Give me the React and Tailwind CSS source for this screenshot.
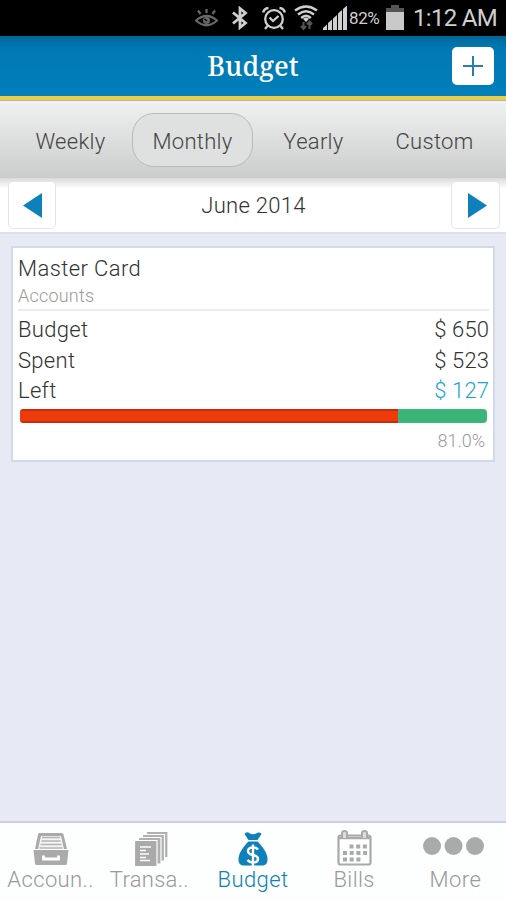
import { useState } from 'react';

const PERIODS = [
  { label: 'Weekly', box: 'w-[121px] ml-[10px]' },
  { label: 'Monthly', box: 'w-[121px] ml-[1px]' },
  { label: 'Yearly', box: 'w-[121px]' },
  { label: 'Custom', box: 'w-[121px]' },
];

const BUDGET = { name: 'Master Card', type: 'Accounts', total: 650, spent: 523 };

function StatusBar() {
  return (
    <div className="flex h-9 shrink-0 items-start bg-black pl-[195px] text-[#cfcfcf]">
      <svg className="mt-[9px] h-[19px] w-[23px]" viewBox="0 0 23 19" fill="none" stroke="#686868" strokeWidth="2.200">
        <path d="M1 11.500Q11.500 2.500 22 11.500Q11.500 21 1 11.500Z" />
        <path d="M11.500 0v4M3 1.500l2.500 3.500M20 1.500l-2.500 3.500" />
        <circle cx="11.500" cy="11.500" r="3.500" fill="#686868" stroke="none" />
        <path d="M9.500 10l2.500 2" stroke="#000" strokeWidth="1.400" />
      </svg>
      <svg className="mt-[6px] ml-[14px] h-[24px] w-[16px]" viewBox="0 0 16 24" fill="none" stroke="currentColor" strokeWidth="2.800">
        <path d="M1 6.500l12.500 10.500L8 21.500V2.500l5.500 4.500L1 17.500" />
      </svg>
      <svg className="mt-[6px] ml-[14px] h-[24px] w-[24px]" viewBox="0 0 24 24" fill="none" stroke="currentColor" strokeWidth="2.300">
        <circle cx="12" cy="13" r="8.800" />
        <path d="M1.200 6.500Q2 2.500 6.500 2M22.800 6.500Q22 2.500 17.500 2" strokeWidth="2.400" />
        <path d="M7.500 11.500l3.500 3.500 5.500-5M5.500 20l-2.500 3M18.500 20l2.500 3" />
      </svg>
      <svg className="mt-[5px] ml-[8px] h-[26px] w-[24px]" viewBox="0 0 24 26" fill="none" stroke="currentColor" strokeWidth="2.500">
        <path d="M1 5.500Q12-2.500 23 5.500M4 9.500Q12 3 20 9.500M7.200 13Q12 8.500 16.800 13" />
        <path d="M9 13.700L12 17l3-3.300Q12 11.500 9 13.700Z" fill="currentColor" stroke="none" />
        <path d="M9.500 17v7M7 21l2.500 3 2.500-3M15.500 24v-7M13 19.500l2.500-3 2.500 3" stroke="#555" strokeWidth="2" />
      </svg>
      <svg className="mt-[6px] ml-[5px] h-[24px] w-[24px]" viewBox="0 0 24 24" fill="currentColor">
        <path d="M0 24v-2l4-3.500V24ZM5 24v-7l4-3.500V24ZM10 24V12.500L14 9v15ZM15 24V7.500L19 4v20ZM20 24V3l4-3.500V24Z" />
      </svg>
      <span className="mt-[8px] ml-[2px] w-[37px] text-[17px] leading-[21px] tracking-[-0.4px]">82%</span>
      <svg className="mt-[5px] h-[25px] w-[18px]" viewBox="0 0 18 25">
        <path d="M5 0h8v3h5v4H0V3h5Z" fill="#555" />
        <path d="M0 7h18v18H0Z" fill="#c9c9c9" />
      </svg>
      <span className="mt-[4px] ml-[9px] text-[24px] leading-[28px] tracking-[-0.7px] whitespace-nowrap">1:12 AM</span>
    </div>
  );
}

function Header() {
  return (
    <header className="grid h-[60px] shrink-0 grid-cols-[1fr_auto_1fr] items-center bg-linear-to-b from-[#006797] via-[#0079b3] via-20% to-[#007fba] pr-3 pl-3">
      <h1 className="col-start-2 -mt-[2px] font-['Noto_Serif','Liberation_Serif',serif] text-[27px] leading-none font-medium text-white">Budget</h1>
      <button type="button" aria-label="Add budget" className="flex h-[38px] w-[42px] items-center justify-center justify-self-end rounded-[5px] bg-white">
        <svg className="h-[20px] w-[20px]" viewBox="0 0 20 20" stroke="#277fae" strokeWidth="2">
          <path d="M10 0v20M0 10h20" />
        </svg>
      </button>
    </header>
  );
}

function Row({ label, value, tone = 'text-[#333]' }) {
  return (
    <div className="flex h-[30.500px] items-center justify-between">
      <span className="tracking-[0.3px]">{label}</span>
      <span className={`tracking-[0.1px] ${tone}`}>$ {value}</span>
    </div>
  );
}

function BudgetCard({ item }) {
  const percent = Math.ceil((item.spent / item.total) * 100);
  return (
    <section className="mx-[11px] mt-[12px] h-[216px] border-2 border-[#d2daea] bg-white pr-[4px] pl-[5px] text-[22px] font-[350] text-[#333]">
      <div className="flex h-[63px] flex-col border-b-2 border-[#ededef] pt-[7px]">
        <span className="leading-[27px] tracking-[0.4px]">{item.name}</span>
        <span className="text-[18px] leading-[27px] tracking-[0.2px] text-[#999]">{item.type}</span>
      </div>
      <div className="pt-[3.500px]">
        <Row label="Budget" value={item.total} />
        <Row label="Spent" value={item.spent} />
        <Row label="Left" value={item.total - item.spent} tone="text-[#21a3d2]" />
      </div>
      <div className="mx-[2px] mt-[3px] flex h-[14px] overflow-hidden rounded-[4px] bg-[#3cb578]">
        <div className="border-y-2 border-[#cb2d0c] bg-[#ee3b0c]" style={{ width: `${percent}%` }} />
      </div>
      <div className="mt-[4px] pr-[4px] text-right text-[18px] leading-[27px] text-[#999]">{percent.toFixed(1)}%</div>
    </section>
  );
}

function AccountsIcon() {
  return (
    <svg className="h-[32px] w-[36px]" viewBox="0 0 36 32">
      <path d="M6 0h23q1 0 1.500 1.500L34 16H2L5 1.500Q5 0 6 0Z" fill="#aaa" />
      <path d="M8 3h20l3 13h-26Z" fill="#f4f4f4" />
      <path d="M9 4.500h18M8.500 8h19M7.500 11.500h21M6.500 15h23" stroke="#b4b4b4" strokeWidth="1.700" />
      <path d="M.5 17h35L34 30.500q0 1.500-2 1.500H4q-2 0-2-1.500Z" fill="#aaa" />
      <path d="M10.500 22.500v3.500h15v-3.500" stroke="#fff" strokeWidth="2.800" fill="none" />
    </svg>
  );
}

function TransactionsIcon() {
  return (
    <svg className="h-[34px] w-[33px]" viewBox="0 0 33 34" fill="#b0b0b0" stroke="#fdfefe" strokeWidth="1.200">
      <path d="M11.500-.5H33V25.500H11.500Z" />
      <path d="M7.500 2.500H29.500V29H7.500Z" />
      <path d="M3.500 5.500H26V32H3.500Z" />
      <path d="M-.5 8.500H22V34.500H-.5Z" fill="#aaa" />
      <path d="M5 15h11M5 18.500h6M5 22h9M5 25.500h6M5 28.500h10" strokeWidth="1.400" />
    </svg>
  );
}

function MoneyBagIcon() {
  return (
    <svg className="h-[34px] w-[30px]" viewBox="0 0 30 34" fill="#0e80bb">
      <path d="M6.500 2q2-3 5.500-.5Q15 3 18 1.500 21.500-.5 23.500 2L19.500 8h-9Z" />
      <path d="M10.500 9.500h9C25 15 29.500 21 29.500 27.500 29.500 32 27 33.500 24 33.500H6C3 33.500.5 32 .5 27.500.5 21 5 15 10.500 9.500Z" />
      <path d="M20 17.500q-1.500-2-5-2-5 0-5 3.500 0 3 5 4t5 4q0 3.500-5 3.500-3.500 0-5.500-2.500M15 12.500v21.500" fill="none" stroke="#fff" strokeWidth="2.400" />
    </svg>
  );
}

function CalendarIcon() {
  return (
    <svg className="h-[36px] w-[35px]" viewBox="0 0 35 36" fill="none" stroke="#aaa">
      <rect x="1.500" y="5.500" width="32" height="29" rx="2" strokeWidth="2.200" />
      <path d="M2 8h31" strokeWidth="2.500" />
      <path d="M5 8V3q0-2 2.500-2T10 3v5M25 8V3q0-2 2.500-2T30 3v5" strokeWidth="2" fill="#ddd" />
      <path d="M12.500 16.500h18M6 23h24.500M6 29.500h17.500" strokeWidth="3.800" strokeDasharray="4 2.700" />
    </svg>
  );
}

function MoreIcon() {
  return (
    <svg className="h-[18px] w-[61px]" viewBox="0 0 61 18" fill="#aaa">
      <circle cx="9" cy="9" r="9" />
      <circle cx="30.500" cy="9" r="9" />
      <circle cx="52" cy="9" r="9" />
    </svg>
  );
}

const NAV = [
  { label: 'Accoun..', Icon: AccountsIcon, iconBox: 'pt-[10px]', text: 'tracking-[0.4px] text-[#999]' },
  { label: 'Transa..', Icon: TransactionsIcon, iconBox: 'pt-[9px]', text: 'tracking-[0.3px] -ml-[5px] text-[#999]' },
  { label: 'Budget', Icon: MoneyBagIcon, iconBox: 'pt-[9px]', text: 'tracking-[0.4px] text-[#0e80bb]' },
  { label: 'Bills', Icon: CalendarIcon, iconBox: 'pt-[7px]', text: 'tracking-[0.4px] text-[#999]' },
  { label: 'More', Icon: MoreIcon, iconBox: 'pt-[14px] pr-[3px]', text: 'tracking-[0.4px] text-[#999]' },
];

export default function App() {
  const [period, setPeriod] = useState('Monthly');

  return (
    <div className="flex h-[900px] w-[506px] flex-col overflow-hidden bg-[#e7eaf4] font-[Roboto,sans-serif]">
      <StatusBar />
      <Header />
      <div className="h-[5px] shrink-0 border-b border-[#b6b6ae] bg-[#e9cd4b]" />

      <nav className="flex h-[77px] shrink-0 items-start bg-linear-to-b from-[#f0f2f1] to-[#cbcdcc] pt-[12px] text-[22px] font-[350] text-[#444]">
        {PERIODS.map(({ label, box }) => (
          <button
            key={label}
            type="button"
            onClick={() => setPeriod(label)}
            className={`flex h-[54px] shrink-0 items-center justify-center rounded-[22px] border pt-[3px] tracking-[0.3px] ${box} ${
              period === label ? 'border-[#b9bbba] bg-[#dfe1e0]' : 'border-transparent'
            }`}
          >
            {label}
          </button>
        ))}
      </nav>

      <div className="flex h-[56px] shrink-0 items-start justify-between border-b-2 border-[#dce0ec] bg-linear-to-b from-[#dadada] via-white via-20% to-white px-[8px] pt-[3px]">
        <button type="button" aria-label="Previous month" className="flex h-[48px] w-[48px] items-center justify-center rounded-[5px] border border-[#e5e6ea] bg-white">
          <svg className="h-[25px] w-[19px]" viewBox="0 0 19 25"><path d="M19 0v25L0 12.500Z" fill="#0e80bb" /></svg>
        </button>
        <span className="pt-[10px] text-[22px] leading-[30px] font-[350] tracking-[0.3px] text-[#333]">June 2014</span>
        <button type="button" aria-label="Next month" className="-mr-[2px] flex h-[48px] w-[49px] items-center justify-center rounded-[5px] border border-[#e5e6ea] bg-white pl-[5px]">
          <svg className="h-[25px] w-[19px]" viewBox="0 0 19 25"><path d="M0 0v25L19 12.500Z" fill="#0e80bb" /></svg>
        </button>
      </div>

      <main className="flex-1">
        <BudgetCard item={BUDGET} />
      </main>

      <footer className="grid h-[79px] shrink-0 grid-cols-5 border-t-2 border-[#cdd1df] bg-[#fdfefe]">
        {NAV.map(({ label, Icon, iconBox, text }) => (
          <button key={label} type="button" className="flex min-w-0 flex-col items-center">
            <span className={`flex h-[44px] items-start justify-center ${iconBox}`}>
              <Icon />
            </span>
            <span className={`text-[22px] leading-[26px] font-[350] whitespace-nowrap ${text}`}>{label}</span>
          </button>
        ))}
      </footer>
    </div>
  );
}
